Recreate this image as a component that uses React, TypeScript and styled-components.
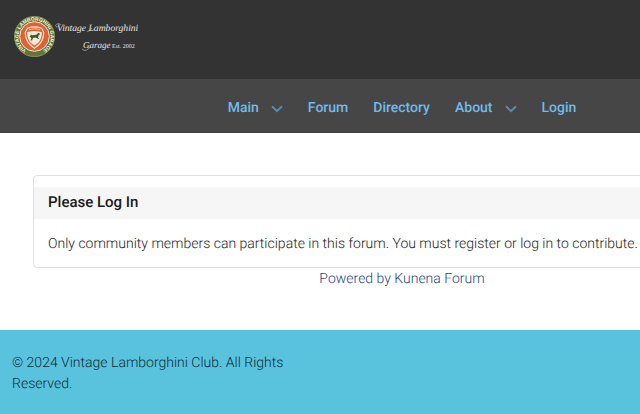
import React from "react";
import styled, { createGlobalStyle } from "styled-components";

const GlobalStyle = createGlobalStyle`
  *, *::before, *::after { box-sizing: border-box; }
  html, body, #root { height: 100%; }
  body {
    margin: 0;
    overflow-x: hidden;
    background: #ffffff;
    color: #1c1c1c;
    font-family: Roboto, "Liberation Sans", sans-serif;
    font-size: 14px;
    font-weight: 300;
    line-height: 21px;
    text-rendering: geometricPrecision;
  }
  a { text-decoration: none; }
`;

const Page = styled.div`
  display: flex;
  flex-direction: column;
  min-width: 804px;
  min-height: 100%;
`;

const Header = styled.header`
  display: flex;
  align-items: flex-start;
  padding: 12px 12px 17px;
  background: #333333;
`;

const Brand = styled.a`
  display: flex;
  height: 50px;
`;

const BrandMark = styled.svg`
  display: block;
  width: 130px;
  height: 50px;
`;

const Nav = styled.nav`
  background: #464646;
  border-bottom: 1px solid #3f3f3f;
`;

const Menu = styled.ul`
  display: flex;
  justify-content: center;
  gap: 25px;
  margin: 0;
  padding: 19px 0 13px;
  list-style: none;
`;

const MenuLink = styled.a`
  display: flex;
  align-items: center;
  gap: 12px;
  color: #6fbbea;
  font-weight: 500;
  line-height: 21px;
`;

const Chevron = styled.svg`
  width: 12px;
  height: 8px;
  fill: none;
  stroke: #5a8ba8;
  stroke-width: 2;
`;

const Main = styled.main`
  flex: 1;
  padding: 42px 33px 40px;
`;

const Card = styled.section`
  padding: 11px 0 12px;
  border: 1px solid #e0e0e0;
  border-radius: 4px;
`;

const CardTitle = styled.h1`
  margin: 0;
  padding: 5px 14px 6px;
  background: #f6f6f6;
  color: #1a1a1a;
  font-size: 15px;
  font-weight: 500;
  line-height: 21px;
`;

const CardText = styled.p`
  margin: 0;
  padding: 15px 14px 0;
`;

const Powered = styled.p`
  margin: 0;
  padding-top: 1px;
  text-align: center;
`;

const PoweredLink = styled.a`
  color: #264486;
`;

const Footer = styled.footer`
  padding: 23px 12px 19px;
  background: #59c3dd;
  color: #0e2c38;
`;

const Copyright = styled.p`
  max-width: 300px;
  margin: 0;
`;

const items = [
  { label: "Main", menu: true },
  { label: "Forum", menu: false },
  { label: "Directory", menu: false },
  { label: "About", menu: true },
  { label: "Login", menu: false },
];

function Logo() {
  return (
    <BrandMark viewBox="0 0 130 50" role="img" aria-label="Vintage Lamborghini Garage">
      <defs>
        <path id="ring" d="M22.5 40.5 A16 16 0 0 1 22.5 8.5 A16 16 0 0 1 22.5 40.5" />
      </defs>
      <circle cx="22.5" cy="24.5" r="20.5" fill="#5f7439" />
      <circle cx="22.5" cy="24.5" r="20" fill="none" stroke="#8e9661" strokeWidth="0.8" />
      <circle cx="22.5" cy="24.5" r="14.8" fill="#e5602f" stroke="#eee5d2" strokeWidth="1" />
      <text fill="#fbf7e4" fontFamily="Liberation Sans" fontWeight="700" fontSize="5">
        <textPath href="#ring" startOffset="50%" textAnchor="middle">
          VINTAGE LAMBORGHINI GARAGE
        </textPath>
      </text>
      <path
        d="M15.4 16.2 Q22.5 13.5 29.6 16.2 L31.8 20.6 Q31.2 29 26.5 33 L22.5 36.2 L18.5 33 Q13.8 29 13.2 20.6 Z"
        fill="#e5602f"
        stroke="#f5e9dc"
        strokeWidth="1.2"
      />
      <path
        d="M15 20.2 Q22.5 17.8 30 20.2 Q29.5 27.5 26 31 L22.5 33.5 L19 31 Q15.5 27.5 15 20.2 Z"
        fill="#f0ead9"
      />
      <path d="M17 17.6 Q22.5 15.8 28 17.6" fill="none" stroke="#f3c4a8" strokeWidth="1" />
      <path
        d="M17.6 25.1 L19 22.6 L20.2 23.3 L24.4 22.7 L26.4 20.8 L28.2 22.1 L26.8 23.2 L26 25.3 L27.4 27.3 L25.6 26.6 L23.4 25.6 L21 26 L20 28.4 L18.5 28.5 L19.4 26.3 L18.4 25 Z"
        fill="#44582f"
      />
      <g fill="#e6e6e6" fontFamily="Liberation Serif">
        <text x="45" y="19" fontStyle="italic" fontSize="9.6">Vintage Lamborghini</text>
        <text x="71" y="36" fontStyle="italic" fontSize="9">Garage</text>
        <text x="100" y="36" fontSize="6">Est. 2002</text>
      </g>
      <g fill="none" stroke="#c8c8c8" strokeWidth="0.6">
        <path d="M49 12.5 Q45 10.5 43.5 13.5 Q44 16 47 14" />
        <path d="M75 19.5 Q78 19.5 80 16" />
        <path d="M70 37 Q74 41 79 34" />
      </g>
    </BrandMark>
  );
}

export default function App() {
  return (
    <>
      <GlobalStyle />
      <Page>
        <Header>
          <Brand href="#home">
            <Logo />
          </Brand>
        </Header>
        <Nav aria-label="Site">
          <Menu>
            {items.map((item) => (
              <li key={item.label}>
                <MenuLink href={"#" + item.label.toLowerCase()}>
                  {item.label}
                  {item.menu && (
                    <Chevron viewBox="0 0 12 8" aria-hidden="true">
                      <path d="M1 1.2 L6 6.2 L11 1.2" />
                    </Chevron>
                  )}
                </MenuLink>
              </li>
            ))}
          </Menu>
        </Nav>
        <Main>
          <Card>
            <CardTitle>Please Log In</CardTitle>
            <CardText>
              Only community members can participate in this forum. You must register or log in to contribute.
            </CardText>
          </Card>
          <Powered>
            <PoweredLink href="#kunena">Powered by Kunena Forum</PoweredLink>
          </Powered>
        </Main>
        <Footer>
          <Copyright>© 2024 Vintage Lamborghini Club. All Rights Reserved.</Copyright>
        </Footer>
      </Page>
    </>
  );
}
